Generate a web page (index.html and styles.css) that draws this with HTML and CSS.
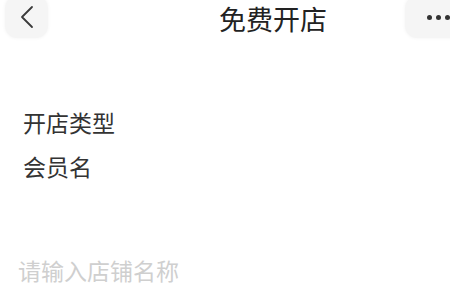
FILE: index.html
```html
<!DOCTYPE html>
<html lang="zh-CN">
<head>
<meta charset="utf-8">
<link rel="stylesheet" href="styles.css">
</head>
<body>
<div class="page">
  <header class="nav">
    <div class="nav-btn back">
      <svg width="16" height="24" viewBox="0 0 16 24"><path d="M13 2 L3 12 L13 22" fill="none" stroke="#3a3a3a" stroke-width="1.8" stroke-linecap="round" stroke-linejoin="round"/></svg>
    </div>
    <div class="nav-title">免费开店</div>
    <div class="nav-btn more">
      <span class="dot"></span><span class="dot"></span><span class="dot"></span>
    </div>
  </header>
  <section class="fields">
    <div class="label">开店类型</div>
    <div class="label">会员名</div>
  </section>
  <div class="input">请输入店铺名称</div>
</div>
</body>
</html>
```
FILE: styles.css
```css
html, body {
  margin: 0;
  padding: 0;
  background: #ffffff;
  overflow: hidden;
}
.page {
  width: 450px;
  height: 300px;
  overflow: hidden;
  font-family: "Noto Sans CJK SC", "Noto Sans", sans-serif;
}
.nav {
  display: flex;
  align-items: flex-end;
  height: 38px;
}
.nav-btn {
  height: 42px;
  background: #f5f5f5;
  border-radius: 12px;
  box-shadow: 0 0 3px 1px #f8f8f8;
  display: flex;
  align-items: center;
  justify-content: center;
  flex-shrink: 0;
}
.back {
  width: 43px;
  margin-left: 5px;
}
.nav-title {
  flex: 1;
  padding-left: 171px;
  font-size: 27px;
  line-height: 38px;
  color: #222;
  align-self: stretch;
  display: flex;
  align-items: center;
}
.more {
  width: 66px;
  margin-right: -21px;
  gap: 4px;
}
.dot {
  width: 5px;
  height: 5px;
  border-radius: 50%;
  background: #333;
}
.fields {
  padding-top: 62px;
  padding-left: 23px;
}
.label {
  font-size: 23px;
  line-height: 44px;
  color: #333;
}
.input {
  margin-top: 60px;
  padding-left: 18px;
  font-size: 23px;
  line-height: 44px;
  color: #cfcfcf;
}
```
